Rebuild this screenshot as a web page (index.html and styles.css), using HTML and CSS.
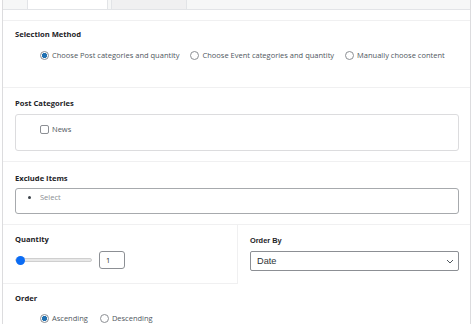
FILE: index.html
```html
<!DOCTYPE html>
<html lang="en">
<head>
    <meta charset="UTF-8">
    <meta name="viewport" content="width=device-width, initial-scale=1.0">
    <title>Content Settings</title>
    <link rel="stylesheet" href="styles.css">
</head>
<body>
<div class="panel">
    <div class="tabs">
        <div class="tab active"></div>
        <div class="tab"></div>
    </div>
    <div class="spacer"></div>

    <div class="section sel-method">
        <div class="title">Selection Method</div>
        <div class="options">
            <label class="opt"><input type="radio" name="method" checked> Choose Post categories and quantity</label>
            <label class="opt"><input type="radio" name="method"> Choose Event categories and quantity</label>
            <label class="opt"><input type="radio" name="method"> Manually choose content</label>
        </div>
    </div>

    <div class="section cats">
        <div class="title">Post Categories</div>
        <div class="box cat-box">
            <label class="opt"><input type="checkbox"> News</label>
        </div>
    </div>

    <div class="section exclude">
        <div class="title">Exclude Items</div>
        <div class="box token-box">
            <ul class="tokens">
                <li>Select</li>
            </ul>
        </div>
    </div>

    <div class="row">
        <div class="cell qty">
            <div class="title">Quantity</div>
            <div class="range-row">
                <div class="range">
                    <span class="thumb"></span>
                </div>
                <input class="num" type="text" value="1">
            </div>
        </div>
        <div class="cell orderby">
            <div class="title">Order By</div>
            <div class="select">
                <span>Date</span>
                <svg width="8" height="5" viewBox="0 0 8 5"><path d="M1 1l3 3 3-3" fill="none" stroke="#50575e" stroke-width="1"/></svg>
            </div>
        </div>
    </div>

    <div class="section order">
        <div class="title">Order</div>
        <div class="options">
            <label class="opt"><input type="radio" name="order" checked> Ascending</label>
            <label class="opt"><input type="radio" name="order"> Descending</label>
        </div>
    </div>
</div>
</body>
</html>
```

FILE: styles.css
```css
body {
    margin: 0;
    background: #fff;
    font-family: "Open Sans", sans-serif;
    color: #3c434a;
}

.panel {
    margin-left: 2px;
    width: 467px;
    height: 324px;
    border-left: 1px solid #dcdcde;
    border-right: 1px solid #dcdcde;
    overflow: hidden;
}

.tabs {
    display: flex;
    gap: 3px;
    height: 9px;
    padding-left: 24px;
    background: #f6f7f7;
    border-bottom: 1px solid #e2e4e7;
}

.tab {
    width: 74px;
    background: #f0f0f1;
    border: 1px solid #e2e4e7;
    border-top: none;
    border-bottom: none;
}

.tab.active {
    width: 79px;
    background: #fff;
}

.spacer {
    height: 10px;
    border-bottom: 1px solid #f0f0f1;
}

.section {
    padding: 0 11px 0 12px;
    border-bottom: 1px solid #f0f0f1;
}

.title {
    font-size: 7.6px;
    font-weight: 700;
    line-height: 11px;
    color: #1d2327;
}

.options {
    display: flex;
    gap: 11px;
    padding-left: 25px;
    margin-top: 10px;
}

.opt {
    display: flex;
    align-items: center;
    gap: 3px;
    font-size: 7.5px;
    line-height: 11px;
    color: #50575e;
    white-space: nowrap;
}

.opt input {
    appearance: none;
    margin: 0;
    width: 9px;
    height: 9px;
    border: 1px solid #8c8f94;
    background: #fff;
    box-sizing: border-box;
}

.opt input[type="radio"] {
    border-radius: 50%;
}

.opt input[type="radio"]:checked {
    background: radial-gradient(circle, #2271b1 0 2.4px, #fff 2.9px);
}

.opt input[type="checkbox"] {
    border-radius: 2px;
}

.sel-method {
    padding-top: 8px;
    box-sizing: border-box;
    height: 67px;
}

.cats {
    padding-top: 10px;
    padding-bottom: 10px;
}

.box {
    margin-top: 5px;
    border: 1px solid #dcdcde;
    border-radius: 3px;
    box-sizing: border-box;
}

.cat-box {
    height: 37px;
    padding: 9px 0 0 24px;
}

.exclude {
    padding-top: 11px;
    padding-bottom: 10px;
}

.token-box {
    height: 26px;
    margin-top: 4px;
    border-color: #a7aaad;
}

.tokens {
    margin: 0;
    padding: 3px 0 0 24px;
    font-size: 7.5px;
    line-height: 11px;
    color: #8c8f94;
}

.tokens li::marker {
    color: #3c434a;
}

.row {
    display: flex;
}

.cell {
    padding-top: 9px;
    box-sizing: border-box;
}

.qty {
    width: 235px;
    height: 59px;
    padding-left: 12px;
    border-right: 1px solid #f0f0f1;
    border-bottom: 1px solid #f0f0f1;
}

.range-row {
    display: flex;
    align-items: center;
    gap: 7px;
    margin-top: 6px;
}

.range {
    position: relative;
    width: 77px;
    height: 4px;
    background: #e8e8e8;
    border: 1px solid #cfcfcf;
    border-radius: 3px;
    box-sizing: border-box;
}

.thumb {
    position: absolute;
    left: 0;
    top: -3px;
    width: 9px;
    height: 9px;
    border-radius: 50%;
    background: #0b6cf4;
}

.num {
    width: 26px;
    height: 18px;
    margin: 0;
    padding: 0 0 0 6px;
    border: 1px solid #8c8f94;
    border-radius: 3px;
    box-sizing: border-box;
    font-family: "Open Sans", sans-serif;
    font-size: 7.4px;
    color: #1d2327;
}

.orderby {
    flex: 1;
    padding-left: 12px;
    padding-right: 11px;
    padding-top: 10px;
}

.orderby .title {
    font-family: "Liberation Sans", sans-serif;
    font-size: 7.4px;
}

.select {
    display: flex;
    align-items: center;
    justify-content: space-between;
    height: 20px;
    margin-top: 5px;
    padding: 0 4px 0 6px;
    border: 1px solid #8c8f94;
    border-radius: 2px;
    box-sizing: border-box;
    font-family: "Liberation Sans", sans-serif;
    font-size: 9.2px;
    color: #2c3338;
}

.order {
    border-bottom: none;
    padding-top: 9px;
}

.order .options {
    gap: 12px;
    margin-top: 9px;
}
```
